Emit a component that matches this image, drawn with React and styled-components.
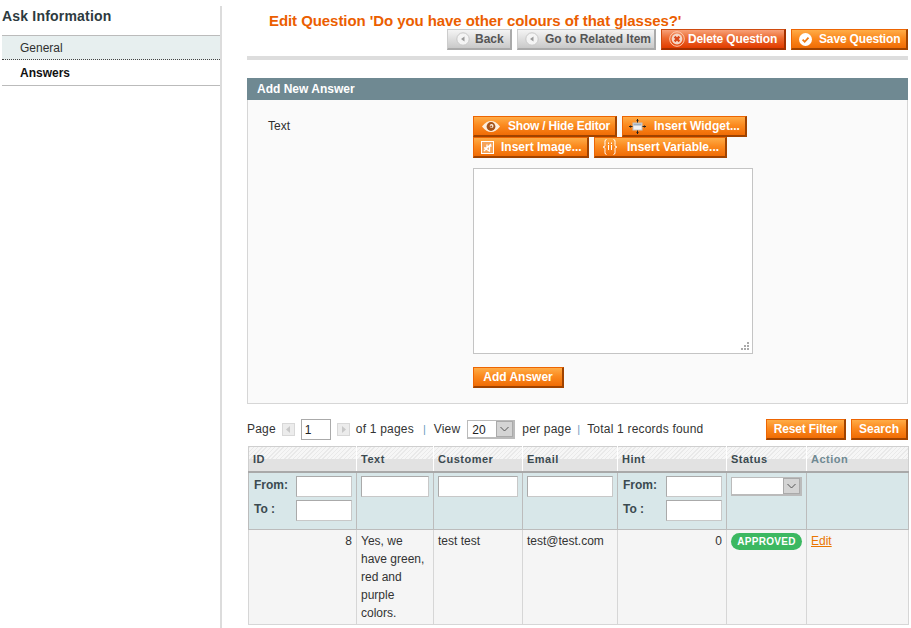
import React from "react";
import styled, { createGlobalStyle, css } from "styled-components";

const Global = createGlobalStyle`
  html, body { margin: 0; padding: 0; background: #fff; }
  body { font: 12px/15px "Liberation Sans", Arial, sans-serif; color: #2f2f2f; width: 911px; height: 628px; overflow: hidden; }
  * { box-sizing: border-box; }
`;

const Page = styled.div`
  display: flex;
  height: 628px;
  padding-left: 2px;
`;
const Sidebar = styled.aside`
  width: 220px;
  margin-top: 6px;
  border-right: 2px solid #dcdcdc;
  flex: none;
`;
const SideTitle = styled.h3`
  margin: 0;
  height: 29px;
  padding-top: 2px;
  font-size: 14px;
  line-height: 17px;
  font-weight: bold;
  letter-spacing: 0.2px;
  color: #2d3a40;
`;
const SideList = styled.div`
  border-top: 1px solid #bbbbbb;
  border-bottom: 1px solid #bbbbbb;
`;
const SideItem = styled.div`
  height: ${p => (p.$active ? 25 : 24)}px;
  padding: ${p => (p.$active ? 6 : 5)}px 0 0 18px;
  font-size: 12px;
  ${p => p.$active
    ? css`font-weight: bold; color: #111;`
    : css`background: #e7efef; border-bottom: 1px dotted #444; color: #2f2f2f;`}
`;
const Main = styled.main`
  margin-left: 25px;
  width: 661px;
  flex: none;
`;
const Head = styled.div`
  height: 60px;
  padding-top: 12px;
  border-bottom: 4px solid #dddddd;
`;
const Title = styled.h3`
  margin: 0 0 0 22px;
  height: 17px;
  font-size: 15px;
  line-height: 17px;
  font-weight: bold;
  color: #eb5e00;
  letter-spacing: -0.07px;
  white-space: nowrap;
`;
const HeadButtons = styled.div`
  display: flex;
  justify-content: flex-end;
  gap: 5px;
`;
const colors = {
  orange: css`
    background: linear-gradient(#ffac47 0%, #fb8a1f 45%, #f06c05 100%);
    border-color: #ed6502 #a04300 #a04300 #ed6502;
    color: #fff;
  `,
  grey: css`
    background: linear-gradient(#f4f4f4, #c9c9c9);
    border-color: #ccc #aaa #aaa #ccc;
    color: #555;
  `,
  red: css`
    background: linear-gradient(#f7a078 0%, #ec6a30 45%, #e23c00 100%);
    border-color: #cf4b10 #a33000 #a33000 #cf4b10;
    color: #fff;
  `,
};
const Btn = styled.button`
  display: inline-flex;
  align-items: center;
  flex: none;
  width: ${p => p.$w}px;
  height: 21px;
  padding: 0 0 0 ${p => p.$pad ?? 0}px;
  justify-content: ${p => (p.$pad == null ? "center" : "flex-start")};
  border-width: 1px 2px 2px 1px;
  border-style: solid;
  font: bold 12px/15px "Liberation Sans", Arial, sans-serif;
  letter-spacing: ${p => p.$ls ?? 0}px;
  white-space: nowrap;
  ${p => colors[p.$kind || "orange"]}
  & > svg { flex: none; margin-right: ${p => p.$gap ?? 8}px; }
`;
const SectionHead = styled.div`
  margin-top: 18px;
  height: 22px;
  padding: 4px 0 0 10px;
  background: #6f8992;
  color: #fff;
  font-weight: bold;
  font-size: 12px;
`;
const Fieldset = styled.div`
  height: 304px;
  background: #fafafa;
  border: 1px solid #d6d6d6;
  border-top: 0;
  display: grid;
  grid-template-columns: 225px 1fr;
`;
const FieldLabel = styled.div`
  padding: 19px 0 0 20px;
`;
const FieldBody = styled.div`
  padding-top: 16px;
`;
const ToolRow = styled.div`
  display: flex;
  gap: 5px;
`;
const TextAreaBox = styled.div`
  position: relative;
  margin-top: 10px;
  width: 280px;
  height: 186px;
  background: #fff;
  border: 1px solid #c4c4c4;
`;
const Grip = styled.svg`
  position: absolute;
  right: 2px;
  bottom: 2px;
`;
const AddRow = styled.div`
  margin-top: 13px;
`;
const Pager = styled.div`
  margin-top: 15px;
  height: 21px;
  display: flex;
  align-items: center;
`;
const PagerText = styled.span`
  margin-left: ${p => p.$ml ?? 0}px;
  color: #333;
  white-space: nowrap;
  letter-spacing: 0.2px;
`;
const Sep = styled.span`
  margin: 0 ${p => p.$mr}px 0 ${p => p.$ml}px;
  color: #6a9ac0;
  font-size: 11px;
`;
const Arrow = styled.span`
  width: 13px;
  height: 13px;
  margin-left: ${p => p.$ml}px;
  background: #ececec;
  border: 1px solid #d8d8d8;
  display: inline-flex;
  align-items: center;
  justify-content: center;
  flex: none;
`;
const PageInput = styled.div`
  margin-left: 6px;
  width: 30px;
  height: 21px;
  border: 1px solid #aaa;
  background: #fff;
  padding: 3px 0 0 3px;
  font-size: 12px;
  color: #222;
`;
const Select = styled.div`
  position: relative;
  width: ${p => p.$w}px;
  height: ${p => p.$h}px;
  margin-left: ${p => p.$ml ?? 0}px;
  margin-top: ${p => p.$mt ?? 0}px;
  border: 1px solid #bbb;
  border-right-width: 2px;
  border-bottom-width: 2px;
  background: #fff;
  padding: 2px 0 0 4px;
  font-size: 12px;
  color: #222;
  flex: none;
`;
const SelectArrow = styled.span`
  position: absolute;
  right: 0;
  top: 0;
  bottom: 0;
  width: 17px;
  background: #d4d4d4;
  border: 1px solid #aaa;
  display: flex;
  align-items: center;
  justify-content: center;
`;
const PagerButtons = styled.div`
  margin-left: auto;
  display: flex;
  gap: 5px;
`;
const Table = styled.table`
  margin-top: 6px;
  margin-left: 1px;
  width: 660px;
  table-layout: fixed;
  border-collapse: collapse;
`;
const Th = styled.th`
  height: 25px;
  padding: 1px 0 0 4px;
  text-align: left;
  font-size: 11px;
  font-weight: bold;
  letter-spacing: 0.5px;
  color: ${p => (p.$muted ? "#6f8992" : "#3b4a50")};
  border: 1px solid #cfcfcf;
  border-left: 1px solid #fff;
  border-right: 1px solid #fff;
  border-bottom: 2px solid #a9a9a9;
  &:first-child { border-left: 1px solid #cfcfcf; }
  &:last-child { border-right: 1px solid #cfcfcf; }
  background:
    repeating-linear-gradient(135deg, #e9e9e9 0 1px, #f6f6f6 1px 3px) top / 100% 12px no-repeat,
    #e2e2e2;
`;
const FilterTd = styled.td`
  height: 58px;
  padding: 3px 0 0 4px;
  vertical-align: top;
  border: 1px solid #bcbcbc;
  border-top: 0;
  background: repeating-conic-gradient(#d3e2e5 0 25%, #dcebed 0 50%) 0 0 / 2px 2px;
`;
const RangeLine = styled.div`
  display: flex;
  align-items: center;
  justify-content: space-between;
  padding-right: 4px;
  height: 21px;
  margin-bottom: 3px;
  padding-left: 1px;
  font-weight: bold;
  font-size: 12px;
  color: #3b4a50;
`;
const RangeLabel = styled.span`
  margin-top: -2px;
`;
const FilterInput = styled.div`
  width: ${p => p.$w}px;
  height: 21px;
  flex: none;
  background: #fff;
  border: 1px solid #aaa;
  border-color: #aaa #c8c8c8 #c8c8c8 #aaa;
`;
const Td = styled.td`
  height: 95px;
  padding: 2px 4px 0 4px;
  vertical-align: top;
  background: #f5f5f5;
  border: 1px solid #d6d6d6;
  border-top: 0;
  font-size: 12px;
  line-height: 18px;
  color: #333;
  text-align: ${p => (p.$right ? "right" : "left")};
`;
const Pill = styled.span`
  display: flex;
  align-items: center;
  justify-content: center;
  width: 71px;
  height: 17px;
  margin-top: 1px;
  border-radius: 9px;
  background: #3cb861;
  color: #fff;
  font-size: 10px;
  font-weight: bold;
  letter-spacing: 0.3px;
`;
const EditLink = styled.a`
  color: #ea7601;
  text-decoration: underline;
`;

const BackIcon = () => (
  <svg width="14" height="14" viewBox="0 0 14 14">
    <circle cx="7" cy="7" r="6.2" fill="#f4f4f4" stroke="#c8c8c8" />
    <path d="M8.5 4.5v5L5 7z" fill="#999" />
  </svg>
);
const DeleteIcon = () => (
  <svg width="16" height="16" viewBox="0 0 16 16">
    <circle cx="8" cy="8" r="7.3" fill="none" stroke="#ffc9ad" strokeWidth="1" />
    <circle cx="8" cy="8" r="5.4" fill="#f4d6c6" />
    <path d="M5.6 5.6l4.8 4.8M10.4 5.6l-4.8 4.8" stroke="#d8481a" strokeWidth="2.2" />
  </svg>
);
const SaveIcon = () => (
  <svg width="13" height="13" viewBox="0 0 13 13">
    <circle cx="6.5" cy="6.5" r="6.5" fill="#fff" />
    <path d="M3.6 6.6l2.1 2.2 3.8-4.2" fill="none" stroke="#ef7a12" strokeWidth="1.8" />
  </svg>
);
const EyeIcon = () => (
  <svg width="18" height="11" viewBox="0 0 18 11">
    <path d="M0 5.5C3 1.5 6 0 9 0s6 1.5 9 5.5C15 9.5 12 11 9 11S3 9.5 0 5.5z" fill="#fdeedd" />
    <circle cx="9" cy="5.5" r="4.4" fill="#a4531a" />
    <circle cx="9.6" cy="5" r="1.9" fill="#fdeedd" />
    <circle cx="9.2" cy="5.6" r="1" fill="#a4531a" />
  </svg>
);
const WidgetIcon = () => (
  <svg width="17" height="15" viewBox="0 0 17 15">
    <rect x="4" y="4" width="9" height="7" fill="#f3f3f3" stroke="#c4c4c4" />
    <rect x="4.5" y="4.5" width="8" height="2" fill="#9fb0c0" />
    <path d="M8.5 0v3.5M8.5 11.5v3.5M0 7.5h3.5M13.5 7.5h3.5" stroke="#222" strokeWidth="1" />
    <path d="M7 2L8.5 .5 10 2zM7 13L8.5 14.5 10 13zM2 6L.5 7.5 2 9zM15 6l1.5 1.5L15 9z" fill="#222" />
  </svg>
);
const ImageIcon = () => (
  <svg width="13" height="13" viewBox="0 0 13 13">
    <rect x=".5" y=".5" width="12" height="12" fill="#f5a45a" stroke="#fff" />
    <path d="M3 10l7-7M6 7V3.5M6 7H3M8 5h2.5M8.5 9.500v-5M5 8l4 2.500" stroke="#fff" strokeWidth="1.3" fill="none" />
  </svg>
);
const VarIcon = () => (
  <svg width="16" height="16" viewBox="0 0 16 16" fill="none" stroke="#fff" strokeWidth="1">
    <path d="M4.5 .5C2.5 .5 3 3 3 5.5S2.5 7.5 1 8c1.500 .5 2 .5 2 2.500s-.5 5 1.500 5" />
    <path d="M11.500 .5c2 0 1.500 2.500 1.500 5s.5 2 2 2.500c-1.500 .5-2 .5-2 2.500s.5 5-1.500 5" />
    <path d="M6.500 6v5M6.500 3.500v1.500M9.500 6v5M9.500 3.500v1.500" />
  </svg>
);
const PageArrow = ({ dir }) => (
  <svg width="5" height="7" viewBox="0 0 5 7">
    <path d={dir === "l" ? "M4 0v7L0 3.500z" : "M1 0v7l4-3.500z"} fill="#c8c8c8" />
  </svg>
);
const Chevron = () => (
  <svg width="9" height="6" viewBox="0 0 9 6">
    <path d="M.5 1l4 4 4-4" fill="none" stroke="#555" strokeWidth="1" />
  </svg>
);

const Range = () => (
  <>
    <RangeLine><RangeLabel>From:</RangeLabel><FilterInput $w={56} /></RangeLine>
    <RangeLine><RangeLabel>To :</RangeLabel><FilterInput $w={56} /></RangeLine>
  </>
);

export default function App() {
  return (
    <Page>
      <Global />
      <Sidebar>
        <SideTitle>Ask Information</SideTitle>
        <SideList>
          <SideItem>General</SideItem>
          <SideItem $active>Answers</SideItem>
        </SideList>
      </Sidebar>
      <Main>
        <Head>
          <Title>Edit Question 'Do you have other colours of that glasses?'</Title>
          <HeadButtons>
            <Btn $kind="grey" $w={65} $pad={8} $gap={5}><BackIcon />Back</Btn>
            <Btn $kind="grey" $w={139} $pad={7} $gap={6}><BackIcon />Go to Related Item</Btn>
            <Btn $kind="red" $w={125} $pad={7} $gap={3} $ls={-0.15}><DeleteIcon />Delete Question</Btn>
            <Btn $w={117} $pad={7} $gap={7} $ls={-0.15}><SaveIcon />Save Question</Btn>
          </HeadButtons>
        </Head>
        <SectionHead>Add New Answer</SectionHead>
        <Fieldset>
          <FieldLabel>Text</FieldLabel>
          <FieldBody>
            <ToolRow>
              <Btn $w={144} $pad={8} $gap={8} $ls={-0.22}><EyeIcon />Show / Hide Editor</Btn>
              <Btn $w={125} $pad={6} $gap={8}><WidgetIcon />Insert Widget...</Btn>
            </ToolRow>
            <ToolRow>
              <Btn $w={116} $pad={7} $gap={7}><ImageIcon />Insert Image...</Btn>
              <Btn $w={133} $pad={7} $gap={9}><VarIcon />Insert Variable...</Btn>
            </ToolRow>
            <TextAreaBox>
              <Grip width="9" height="9" viewBox="0 0 9 9">
                <path d="M6 0h2v2H6zM3 3h2v2H3zM6 3h2v2H6zM0 6h2v2H0zM3 6h2v2H3zM6 6h2v2H6z" fill="#aaa" />
              </Grip>
            </TextAreaBox>
            <AddRow><Btn $w={91}>Add Answer</Btn></AddRow>
          </FieldBody>
        </Fieldset>
        <Pager>
          <PagerText>Page</PagerText>
          <Arrow $ml={6}><PageArrow dir="l" /></Arrow>
          <PageInput>1</PageInput>
          <Arrow $ml={6}><PageArrow dir="r" /></Arrow>
          <PagerText $ml={6}>of 1 pages</PagerText>
          <Sep $ml={9} $mr={8}>|</Sep>
          <PagerText>View</PagerText>
          <Select $w={48} $h={19} $ml={7}>20<SelectArrow><Chevron /></SelectArrow></Select>
          <PagerText $ml={7}>per page</PagerText>
          <Sep $ml={6} $mr={7}>|</Sep>
          <PagerText>Total 1 records found</PagerText>
          <PagerButtons>
            <Btn $w={80} $ls={-0.15}>Reset Filter</Btn>
            <Btn $w={57}>Search</Btn>
          </PagerButtons>
        </Pager>
        <Table>
          <colgroup>
            <col style={{ width: 108 }} />
            <col style={{ width: 77 }} />
            <col style={{ width: 89 }} />
            <col style={{ width: 95 }} />
            <col style={{ width: 109 }} />
            <col style={{ width: 80 }} />
            <col style={{ width: 102 }} />
          </colgroup>
          <thead>
            <tr>
              <Th>ID</Th><Th>Text</Th><Th>Customer</Th><Th>Email</Th><Th>Hint</Th><Th>Status</Th><Th $muted>Action</Th>
            </tr>
            <tr>
              <FilterTd><Range /></FilterTd>
              <FilterTd><FilterInput $w={68} /></FilterTd>
              <FilterTd><FilterInput $w={80} /></FilterTd>
              <FilterTd><FilterInput $w={86} /></FilterTd>
              <FilterTd><Range /></FilterTd>
              <FilterTd><Select $w={71} $h={19} $mt={1}><SelectArrow><Chevron /></SelectArrow></Select></FilterTd>
              <FilterTd />
            </tr>
          </thead>
          <tbody>
            <tr>
              <Td $right>8</Td>
              <Td>Yes, we have green, red and purple colors.</Td>
              <Td>test test</Td>
              <Td>test@test.com</Td>
              <Td $right>0</Td>
              <Td><Pill>APPROVED</Pill></Td>
              <Td><EditLink>Edit</EditLink></Td>
            </tr>
          </tbody>
        </Table>
      </Main>
    </Page>
  );
}
